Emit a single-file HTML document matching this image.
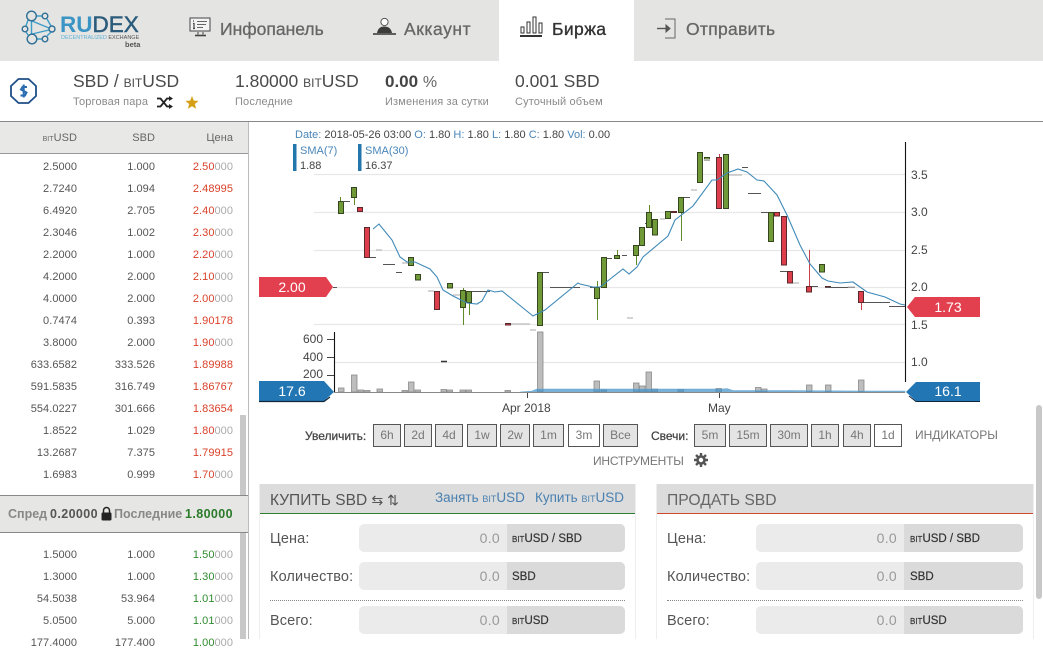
<!DOCTYPE html>
<html><head><meta charset="utf-8"><style>
html,body{margin:0;padding:0;background:#fff}
body{width:1043px;height:639px;overflow:hidden;position:relative;font-family:"Liberation Sans",sans-serif;color:#444}
.a{position:absolute;white-space:nowrap}
.nav{top:19px;font-size:17.5px;line-height:20px;color:#666;-webkit-text-stroke:.3px #666}
.big{top:71px;font-size:17.5px;line-height:21px;color:#4a4a4a}
.sc{font-size:17px;font-variant:small-caps}
.sub{top:96px;font-size:11px;line-height:13px;color:#8a8a8a;letter-spacing:.15px}
.c{position:absolute;text-align:right;font-size:11px;line-height:14px;color:#555;white-space:nowrap;letter-spacing:.05px}
.n3{color:#aaa}
.red{color:#d9412a}.grn{color:#2f8a2f}
.btn{position:absolute;top:424px;height:21px;line-height:21px;border:1px solid #555;background:#e4e4e4;text-align:center;font-size:12px;color:#777;box-sizing:content-box}
.btn.on{background:#fff}
.lbl{font-size:14.5px;line-height:16px;color:#555;letter-spacing:.12px}
.inp{position:absolute;height:28px;background:#ebebeb;border-radius:5px;overflow:hidden}
.inp i{position:absolute;top:0;bottom:0;background:#dadada}
.inp b{position:absolute;top:6px;font-weight:normal;font-size:14px;line-height:16px;color:#999;letter-spacing:.3px}
.inp u{position:absolute;top:8px;text-decoration:none;font-size:11.5px;line-height:14px;color:#333;-webkit-text-stroke:.2px #333}
.inp u s{text-decoration:none;font-size:8px}
.hd{position:absolute;top:484px;height:30px;background:#dcdcdc;box-sizing:border-box}
.sp{top:507px;font-size:12.5px;line-height:15px;font-weight:bold}
</style></head><body>

<!-- top nav -->
<div class="a" style="left:0;top:0;width:1043px;height:61px;background:#e4e4e3"></div>
<div class="a" style="left:499px;top:0;width:135px;height:61px;background:#fff"></div>

<svg class="a" style="left:20px;top:8px" width="40" height="42" viewBox="0 0 40 42" fill="none" stroke="#2f6f96" stroke-width="1.4">
<path d="M12 13L29 20M12 26L29 22M11.500 13V26M17 8H22M8 12L6 18M8 27L6 24M17 31H22M27 11L31 18M27 28L31 24" stroke="#3d9cc8"/>
<circle cx="11.500" cy="8" r="4.800" fill="#e4e4e3"/><circle cx="25" cy="8" r="2.800"/><circle cx="5" cy="21" r="2.800"/><circle cx="32" cy="21" r="3"/><circle cx="12" cy="31" r="4.800" fill="#e4e4e3"/><circle cx="25" cy="31" r="2.800"/>
</svg>
<div class="a" style="left:60px;top:12px;font-size:22.5px;line-height:25px;font-weight:bold;color:#3a94c4">RU<span style="font-weight:normal;color:#2c5c7c;-webkit-text-stroke:.5px #2c5c7c">DEX</span></div>
<div class="a" style="left:61px;top:35px;font-size:5.500px;line-height:6px;color:#5fb2d8">DECENTRALIZED <span style="color:#555">EXCHANGE</span></div>
<div class="a" style="left:125px;top:41px;font-size:7.500px;line-height:8px;color:#555;font-weight:bold">beta</div>

<svg class="a" style="left:189px;top:17px" width="23" height="20" viewBox="0 0 23 20" fill="none" stroke="#444" stroke-width="1">
<rect x="1" y="1" width="20" height="13" fill="#f3f3f3"/><path d="M4 4h1M4 6.500h1v5M4 11.500h2" stroke-width="1.200"/><path d="M8 4.500h10M8 7.500h9M8 10.500h6" stroke-width="1.100" stroke="#666"/><path d="M9 15v2.500M14 15v2.500" /><path d="M6 18.500h11" stroke-width="1.600"/>
</svg>
<div class="a nav" style="left:220px">Инфопанель</div>

<svg class="a" style="left:373px;top:17px" width="23" height="20" viewBox="0 0 23 20">
<circle cx="11.500" cy="5" r="3.600" fill="#fff" stroke="#555"/><path d="M4 16C5 11 8 9.500 11.500 9.500S18 11 19 16Z" fill="#3c3c3c"/><path d="M0 17h23" stroke="#333" stroke-width="1.400"/>
</svg>
<div class="a nav" style="left:404px;letter-spacing:.55px">Аккаунт</div>

<svg class="a" style="left:520px;top:16px" width="23" height="22" viewBox="0 0 23 22" fill="none" stroke="#333" stroke-width="1">
<rect x="1" y="11" width="3" height="6"/><rect x="7" y="6" width="3" height="11"/><rect x="13" y="1" width="3" height="16"/><rect x="19" y="7" width="3" height="10"/><path d="M0 20h22" stroke-width="2"/>
</svg>
<div class="a nav" style="left:552px;color:#333;-webkit-text-stroke:.35px #333;letter-spacing:.4px">Биржа</div>

<svg class="a" style="left:657px;top:18px" width="20" height="22" viewBox="0 0 20 22" fill="none" stroke="#555" stroke-width="1">
<path d="M8 1H18V20H8" stroke="#666"/><path d="M0 10.500H9" stroke-width="1.400"/><path d="M9 7l4 3.500L9 14Z" fill="#555"/>
</svg>
<div class="a nav" style="left:686px;letter-spacing:.3px">Отправить</div>

<!-- market bar -->
<svg class="a" style="left:9px;top:76px" width="30" height="30" viewBox="0 0 30 30" fill="none">
<path d="M9.500 3H19.500L27 10V20L19.500 27H9.500L2 20V10Z" stroke="#1f4f88" stroke-width="1.800" stroke-linejoin="round"/>
<path d="M18 11H13.500L12 13.500 17.500 16.500 16 19.500H11.500M14.700 8.500V21.500" stroke="#2a6db0" stroke-width="2"/>
</svg>
<div class="a big" style="left:73px">SBD / <span class="sc">віт</span>USD</div>
<div class="a sub" style="left:73px">Торговая пара</div>
<svg class="a" style="left:157px;top:96px" width="17" height="13" viewBox="0 0 17 13" fill="none" stroke="#222" stroke-width="1.800">
<path d="M0 2.500H3.500L10 10.500H13M0 10.500H3.500L10 2.500H13"/><path d="M12 0L16 2.500 12 5ZM12 8L16 10.500 12 13Z" fill="#222" stroke="none"/>
</svg>
<svg class="a" style="left:185px;top:96px" width="14" height="13" viewBox="0 0 14 13"><path d="M7 0L8.800 4.600 13.600 4.900 9.900 8 11.100 12.800 7 10.200 2.900 12.800 4.100 8 .4 4.900 5.200 4.600Z" fill="#d4a017"/></svg>
<div class="a big" style="left:235px">1.80000 <span class="sc">віт</span>USD</div>
<div class="a sub" style="left:235px">Последние</div>
<div class="a big" style="left:385px;font-weight:bold;font-size:17px"><span style="color:#444">0.00</span> <span style="font-weight:normal;font-size:16px;color:#666">%</span></div>
<div class="a sub" style="left:385px">Изменения за сутки</div>
<div class="a big" style="left:515px">0.001 SBD</div>
<div class="a sub" style="left:515px">Суточный объем</div>
<div class="a" style="left:0;top:121px;width:1043px;height:1px;background:#888"></div>

<!-- order book -->
<div class="a" style="left:0;top:122px;width:248px;height:31px;background:#e8e8e7;border-bottom:1px solid #999"></div>
<div class="a" style="left:248px;top:122px;width:1px;height:517px;background:#bbb"></div>
<div class="c" style="top:131px;left:0;width:77px;color:#666"><span class="sc" style="font-size:10px">віт</span>USD</div>
<div class="c" style="top:131px;left:0;width:155px;color:#666">SBD</div>
<div class="c" style="top:131px;left:0;width:233px;color:#666">Цена</div>

<div class="a" style="left:0;top:1px;width:248px;height:638px">
<div class="c" style="top:159px;right:171px">2.5000</div><div class="c" style="top:159px;right:93px">1.000</div><div class="c n3" style="top:159px;right:15px"><span class="red">2.50</span>000</div>
<div class="c" style="top:181px;right:171px">2.7240</div><div class="c" style="top:181px;right:93px">1.094</div><div class="c n3" style="top:181px;right:15px"><span class="red">2.48995</span></div>
<div class="c" style="top:203px;right:171px">6.4920</div><div class="c" style="top:203px;right:93px">2.705</div><div class="c n3" style="top:203px;right:15px"><span class="red">2.40</span>000</div>
<div class="c" style="top:225px;right:171px">2.3046</div><div class="c" style="top:225px;right:93px">1.002</div><div class="c n3" style="top:225px;right:15px"><span class="red">2.30</span>000</div>
<div class="c" style="top:247px;right:171px">2.2000</div><div class="c" style="top:247px;right:93px">1.000</div><div class="c n3" style="top:247px;right:15px"><span class="red">2.20</span>000</div>
<div class="c" style="top:269px;right:171px">4.2000</div><div class="c" style="top:269px;right:93px">2.000</div><div class="c n3" style="top:269px;right:15px"><span class="red">2.10</span>000</div>
<div class="c" style="top:291px;right:171px">4.0000</div><div class="c" style="top:291px;right:93px">2.000</div><div class="c n3" style="top:291px;right:15px"><span class="red">2.00</span>000</div>
<div class="c" style="top:313px;right:171px">0.7474</div><div class="c" style="top:313px;right:93px">0.393</div><div class="c n3" style="top:313px;right:15px"><span class="red">1.90178</span></div>
<div class="c" style="top:335px;right:171px">3.8000</div><div class="c" style="top:335px;right:93px">2.000</div><div class="c n3" style="top:335px;right:15px"><span class="red">1.90</span>000</div>
<div class="c" style="top:357px;right:171px">633.6582</div><div class="c" style="top:357px;right:93px">333.526</div><div class="c n3" style="top:357px;right:15px"><span class="red">1.89988</span></div>
<div class="c" style="top:379px;right:171px">591.5835</div><div class="c" style="top:379px;right:93px">316.749</div><div class="c n3" style="top:379px;right:15px"><span class="red">1.86767</span></div>
<div class="c" style="top:401px;right:171px">554.0227</div><div class="c" style="top:401px;right:93px">301.666</div><div class="c n3" style="top:401px;right:15px"><span class="red">1.83654</span></div>
<div class="c" style="top:423px;right:171px">1.8522</div><div class="c" style="top:423px;right:93px">1.029</div><div class="c n3" style="top:423px;right:15px"><span class="red">1.80</span>000</div>
<div class="c" style="top:445px;right:171px">13.2687</div><div class="c" style="top:445px;right:93px">7.375</div><div class="c n3" style="top:445px;right:15px"><span class="red">1.79915</span></div>
<div class="c" style="top:467px;right:171px">1.6983</div><div class="c" style="top:467px;right:93px">0.999</div><div class="c n3" style="top:467px;right:15px"><span class="red">1.70</span>000</div>
<div class="c" style="top:547px;right:171px">1.5000</div><div class="c" style="top:547px;right:93px">1.000</div><div class="c n3" style="top:547px;right:15px"><span class="grn">1.50</span>000</div>
<div class="c" style="top:569px;right:171px">1.3000</div><div class="c" style="top:569px;right:93px">1.000</div><div class="c n3" style="top:569px;right:15px"><span class="grn">1.30</span>000</div>
<div class="c" style="top:591px;right:171px">54.5038</div><div class="c" style="top:591px;right:93px">53.964</div><div class="c n3" style="top:591px;right:15px"><span class="grn">1.01</span>000</div>
<div class="c" style="top:613px;right:171px">5.0500</div><div class="c" style="top:613px;right:93px">5.000</div><div class="c n3" style="top:613px;right:15px"><span class="grn">1.01</span>000</div>
<div class="c" style="top:635px;right:171px">177.4000</div><div class="c" style="top:635px;right:93px">177.400</div><div class="c n3" style="top:635px;right:15px"><span class="grn">1.00</span>000</div>
</div>

<div class="a" style="left:240px;top:415px;width:6px;height:224px;background:#c8c8c8"></div>
<div class="a" style="left:0;top:495px;width:248px;height:36px;background:#e6e6e5;border-top:1px solid #888;border-bottom:1px solid #888"></div>
<div class="a sp" style="left:8px;color:#888">Спред</div>
<div class="a sp" style="left:50px;color:#555;letter-spacing:.4px">0.20000</div>
<svg class="a" style="left:100px;top:506px" width="13" height="15" viewBox="0 0 13 15"><path d="M3.500 7V4.500a3 3 0 0 1 6 0V7" fill="none" stroke="#222" stroke-width="1.500"/><rect x="1.500" y="6.500" width="10" height="8" rx="1.200" fill="#222"/></svg>
<div class="a sp" style="left:114px;color:#888">Последние</div>
<div class="a sp" style="left:185px;color:#2a7a2a;letter-spacing:.4px">1.80000</div>

<!-- chart -->
<svg class="a" style="left:0;top:0" width="1043" height="420" viewBox="0 0 1043 420" font-family="Liberation Sans, sans-serif">
<g stroke="#e8e8e8" stroke-width="1.200">
<path d="M314 174.500H905M314 212.500H905M314 250.500H905M314 287.500H905M314 324.500H905M334 362.500H905"/>
</g>
<!-- volume bars -->
<g fill="#bdbdbd" stroke="#8a8a8a" stroke-width=".8">
<rect x="338.500" y="388" width="5.500" height="4"/><rect x="351.500" y="375" width="5.500" height="17"/><rect x="358" y="390" width="5.500" height="2"/><rect x="364.500" y="390.500" width="5.500" height="1.500"/><rect x="377" y="389" width="5.500" height="3"/><rect x="402" y="390.500" width="5.500" height="1.500"/><rect x="408.500" y="382" width="5.500" height="10"/><rect x="415" y="390" width="5.500" height="2"/><rect x="441" y="389.500" width="5.500" height="2.500"/><rect x="447" y="390" width="5.500" height="2"/><rect x="460" y="390" width="5.500" height="2"/><rect x="466" y="390" width="5.500" height="2"/><rect x="505" y="390.500" width="5.500" height="1.500"/><rect x="537.500" y="332" width="5.500" height="60"/><rect x="594" y="381" width="5.500" height="11"/><rect x="601" y="390" width="5.500" height="2"/><rect x="633.500" y="383" width="5.500" height="9"/><rect x="639.500" y="386" width="5.500" height="6"/><rect x="646" y="372" width="5.500" height="20"/><rect x="652" y="389" width="5.500" height="3"/><rect x="678" y="389.500" width="5.500" height="2.500"/><rect x="716" y="388.500" width="5.500" height="3.500"/><rect x="755.500" y="387.500" width="5.500" height="4.500"/><rect x="761.500" y="389" width="5.500" height="3"/><rect x="806.500" y="385" width="5.500" height="7"/><rect x="825.500" y="385" width="5.500" height="7"/><rect x="858.500" y="380" width="5.500" height="12"/>
</g>
<path d="M520 392L532 391L537 389H722L727 388.500L733 390.500H790L860 391H905V392.500H520Z" fill="#3f8fc7" fill-opacity=".7" stroke="#6aa9d3" stroke-width=".6"/>
<path d="M334 392.500H905" stroke="#888" stroke-width="1"/>
<!-- candles -->
<g fill="none" stroke="#5f8a28" stroke-width="1">
<path d="M340.500 197V201M354.500 205V198M463.500 288V325M469.500 303V315M597.500 281V320M617.500 250V255M636.500 256V265M649.500 205V212M681.500 213V241"/>
</g>
<g fill="#709a37" stroke="#36471f" stroke-width="1">
<rect x="338.500" y="201.500" width="5" height="12"/><rect x="351.500" y="187.500" width="5" height="10"/><rect x="408.500" y="257.500" width="5" height="8"/><rect x="415.500" y="274.500" width="5" height="5.500"/><rect x="447.500" y="283.500" width="5" height="4.500"/><rect x="460.500" y="290.500" width="5" height="17"/><rect x="466.500" y="291.500" width="5" height="11"/><rect x="537.500" y="272.500" width="5" height="53"/><rect x="594.500" y="287.500" width="5" height="11"/><rect x="601.500" y="257.500" width="5" height="30"/><rect x="614.500" y="255.500" width="5" height="3"/><rect x="633.500" y="245.500" width="5" height="10"/><rect x="639.500" y="227.500" width="5" height="18"/><rect x="646.500" y="212.500" width="5" height="15"/><rect x="652.500" y="219.500" width="5" height="15.500"/><rect x="665.500" y="211.500" width="5" height="7"/><rect x="678.500" y="197.500" width="5" height="15"/><rect x="697.500" y="152.500" width="5" height="30"/><rect x="704.500" y="157.500" width="5" height="2.500"/><rect x="723.500" y="154.500" width="5" height="54"/><rect x="768.500" y="212.500" width="5" height="29"/><rect x="819.500" y="264.500" width="5" height="7.500"/>
</g>
<path d="M719.500 154V157M809.500 250V286M861.500 303V310" stroke="#c8404c" stroke-width="1"/>
<g fill="#dc3f4b" stroke="#5c2a2c" stroke-width="1">
<rect x="357.500" y="207.500" width="5" height="4"/><rect x="364.500" y="227.500" width="5" height="30"/><rect x="434.500" y="291.500" width="5" height="18"/><rect x="505.500" y="323.500" width="5" height="1.500"/><rect x="671.500" y="211.500" width="5" height="1"/><rect x="716.500" y="157.500" width="5" height="51"/><rect x="774.500" y="212.500" width="5" height="3.500"/><rect x="781.500" y="216.500" width="5" height="48.500"/><rect x="787.500" y="271.500" width="5" height="11.500"/><rect x="806.500" y="286.500" width="5" height="5.500"/><rect x="825.500" y="286.500" width="5" height=".8"/><rect x="858.500" y="291.500" width="5" height="11"/>
</g>
<!-- dojis -->
<g stroke="#555" stroke-width="1">
<path d="M343 201.500H350M370 257.500H376M383 264.500H395M396 272.500H402M472 291.500H490M543 272.500H549M550 287.500H580M590 287.500H594M607 258.500H612M622 255.500H627M645 223.500H646M684 197.500H690M742 167.500H748M748 193.500H761M761 212.500H768M780 271.500H787M812 286.500H818M826 287.500H855M864 302.500H890M889 306.500H905" />
<path d="M333 287.500H337" />
<path d="M441 361.500H447" stroke="#333" stroke-width="1.500"/>
</g>
<g stroke="#bbb" stroke-width="1.200">
<path d="M376 250H382M402 263H408M428 291H434M453 295H460M511 324H530M530 330H536M660 219H665M691 190H697M704 159.500H710M729 175H742M793 283H799M848 287H855M627 318H633"/>
</g>
<!-- SMA -->
<polyline fill="none" stroke="#3f8ab8" stroke-width="1.100" points="373,229 379,224 392,240 400,257 407,262 415,262 430,269 437,277 443,290 453,296 467,303 477,304 482,301 488,290 495,292 502,291 533,316 545,310 578,283 580,284 593,287 600,287 623,269 629,274 637,267 643,257 668,236 675,220 693,206 712,180 717,180 727,173 738,169 747,172 757,180 764,181 777,195 787,215 800,245 810,264 822,278 828,281 840,283 853,282 867,292 885,297 900,304 905,305"/>
<!-- axes -->
<path d="M905.500 142V382M334.500 332V392" stroke="#111" stroke-width="1.100" fill="none"/>
<path d="M327 339.500H334M327 357.500H334M327 375.500H334M527.500 393V398M719.500 393V398" stroke="#444" stroke-width="1"/>
<g font-size="12" fill="#444">
<text x="911" y="179">3.5</text><text x="911" y="216">3.0</text><text x="911" y="254">2.5</text><text x="911" y="291">2.0</text><text x="911" y="329">1.5</text><text x="911" y="366">1.0</text>
<text x="303" y="343">600</text><text x="303" y="361">400</text><text x="303" y="378">200</text>
<text x="502" y="412">Apr 2018</text><text x="708" y="412">May</text>
</g>
<!-- legend -->
<g font-size="11">
<text x="295" y="138" fill="#4a86b8">Date: <tspan fill="#444">2018-05-26 03:00</tspan> O: <tspan fill="#444">1.80</tspan> H: <tspan fill="#444">1.80</tspan> L: <tspan fill="#444">1.80</tspan> C: <tspan fill="#444">1.80</tspan> Vol: <tspan fill="#444">0.00</tspan></text>
<text x="300" y="154" fill="#4a86b8">SMA(7)</text><text x="300" y="169" fill="#444">1.88</text>
<text x="365" y="154" fill="#4a86b8">SMA(30)</text><text x="365" y="169" fill="#444">16.37</text>
</g>
<rect x="293" y="144" width="3.500" height="27" fill="#2276ac"/><rect x="358" y="144" width="3.500" height="27" fill="#2276ac"/>
<!-- tags -->
<path d="M259 277H326L333 287L326 297H259Z" fill="#e2404e"/>
<path d="M907 307L915 297H980V317H915Z" fill="#e2404e"/>
<path d="M259 381H324L334 392L324 401H259Z" fill="#2276b4"/><path d="M259 401.500H324L330 397" stroke="#12263a" stroke-width="1.200" fill="none"/>
<path d="M906 392L916 382H980V401H916Z" fill="#2276b4"/><path d="M909 396L916 401.500H980" stroke="#12263a" stroke-width="1" fill="none"/>
<g font-size="14" fill="#fff" text-anchor="middle">
<text x="292" y="292">2.00</text><text x="948" y="312">1.73</text><text x="292" y="396">17.6</text><text x="948" y="396">16.1</text>
</g>
</svg>

<!-- toolbar -->
<div class="a" style="left:305px;top:429px;font-size:12px;line-height:14px;color:#444;-webkit-text-stroke:.25px #444">Увеличить:</div>
<div class="btn" style="left:373px;width:26px">6h</div>
<div class="btn" style="left:404px;width:26px">2d</div>
<div class="btn" style="left:435px;width:26px">4d</div>
<div class="btn" style="left:467px;width:28px">1w</div>
<div class="btn" style="left:500px;width:28px">2w</div>
<div class="btn" style="left:533px;width:29px">1m</div>
<div class="btn on" style="left:568px;width:30px">3m</div>
<div class="btn" style="left:603px;width:33px">Все</div>
<div class="a" style="left:651px;top:429px;font-size:12px;line-height:14px;color:#444;-webkit-text-stroke:.25px #444">Свечи:</div>
<div class="btn" style="left:694px;width:30px">5m</div>
<div class="btn" style="left:729px;width:36px">15m</div>
<div class="btn" style="left:770px;width:36px">30m</div>
<div class="btn" style="left:811px;width:26px">1h</div>
<div class="btn" style="left:843px;width:26px">4h</div>
<div class="btn on" style="left:874px;width:26px">1d</div>
<div class="a" style="left:915px;top:428px;font-size:12px;line-height:15px;color:#777">ИНДИКАТОРЫ</div>
<div class="a" style="left:593px;top:454px;font-size:12px;line-height:15px;color:#777;letter-spacing:-.2px">ИНСТРУМЕНТЫ</div>
<svg class="a" style="left:694px;top:453px" width="14" height="14" viewBox="0 0 14 14"><circle cx="7" cy="7" r="3.500" fill="none" stroke="#555" stroke-width="2.600"/><path d="M7 0V3M7 11V14M0 7H3M11 7H14M2 2L4 4M10 10L12 12M12 2L10 4M4 10L2 12" stroke="#555" stroke-width="2.400"/></svg>

<!-- buy panel -->
<div class="a" style="left:259px;top:484px;width:377px;height:155px;border-left:1px solid #eee;border-right:1px solid #eee;box-sizing:border-box"></div>
<div class="hd" style="left:260px;width:375px;border-bottom:1.500px solid #2f7d2f"></div>
<div class="a" style="left:270px;top:491px;font-size:15.500px;line-height:19px;color:#555">КУПИТЬ SBD <span style="font-size:14px">⇆ ⇅</span></div>
<div class="a" style="left:435px;top:490px;font-size:13.500px;line-height:16px;color:#4a80b0">Занять <span class="sc" style="font-size:13.500px">віт</span>USD</div>
<div class="a" style="left:535px;top:490px;font-size:13.500px;line-height:16px;color:#4a80b0">Купить <span class="sc" style="font-size:13.500px">віт</span>USD</div>
<div class="a lbl" style="left:270px;top:531px">Цена:</div>
<div class="a lbl" style="left:270px;top:569px">Количество:</div>
<div class="a lbl" style="left:270px;top:613px">Всего:</div>
<div class="inp" style="left:359px;top:524px;width:266px"><i style="left:148px;right:0"></i><b style="right:125px">0.0</b><u style="left:153px"><s>ВІТ</s>USD / SBD</u></div>
<div class="inp" style="left:359px;top:562px;width:266px"><i style="left:148px;right:0"></i><b style="right:125px">0.0</b><u style="left:153px">SBD</u></div>
<div class="a" style="left:270px;top:600px;width:355px;border-top:1px dotted #888"></div>
<div class="inp" style="left:359px;top:606px;width:266px"><i style="left:148px;right:0"></i><b style="right:125px">0.0</b><u style="left:153px"><s>ВІТ</s>USD</u></div>

<!-- sell panel -->
<div class="a" style="left:656px;top:484px;width:378px;height:155px;border-left:1px solid #eee;border-right:1px solid #eee;box-sizing:border-box"></div>
<div class="hd" style="left:657px;width:376px;border-bottom:1.500px solid #d2492a"></div>
<div class="a" style="left:667px;top:491px;font-size:15.700px;line-height:19px;color:#666">ПРОДАТЬ SBD</div>
<div class="a lbl" style="left:667px;top:531px">Цена:</div>
<div class="a lbl" style="left:667px;top:569px">Количество:</div>
<div class="a lbl" style="left:667px;top:613px">Всего:</div>
<div class="inp" style="left:756px;top:524px;width:267px"><i style="left:148px;right:0"></i><b style="right:126px">0.0</b><u style="left:154px"><s>ВІТ</s>USD / SBD</u></div>
<div class="inp" style="left:756px;top:562px;width:267px"><i style="left:148px;right:0"></i><b style="right:126px">0.0</b><u style="left:154px">SBD</u></div>
<div class="a" style="left:667px;top:600px;width:356px;border-top:1px dotted #888"></div>
<div class="inp" style="left:756px;top:606px;width:267px"><i style="left:148px;right:0"></i><b style="right:126px">0.0</b><u style="left:154px"><s>ВІТ</s>USD</u></div>

<div class="a" style="left:1036px;top:405px;width:6px;height:194px;background:#c8c8c8;border-radius:3px"></div>
</body></html>
